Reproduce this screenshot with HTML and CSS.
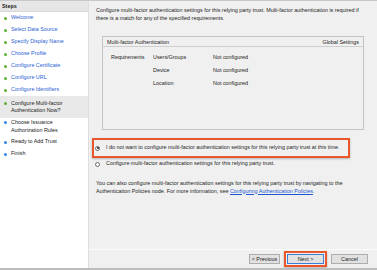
FILE: index.html
```html
<!DOCTYPE html>
<html>
<head>
<meta charset="utf-8">
<link rel="stylesheet" href="styles.css">
</head>
<body>
<div class="window">
  <div class="main">
    <aside class="steps">
      <div class="steps-head">Steps</div>
      <ul class="step-list">
        <li class="step done"><span class="dot"></span><span class="label">Welcome</span></li>
        <li class="step done"><span class="dot"></span><span class="label">Select Data Source</span></li>
        <li class="step done"><span class="dot"></span><span class="label">Specify Display Name</span></li>
        <li class="step done"><span class="dot"></span><span class="label">Choose Profile</span></li>
        <li class="step done"><span class="dot"></span><span class="label">Configure Certificate</span></li>
        <li class="step done"><span class="dot"></span><span class="label">Configure URL</span></li>
        <li class="step done"><span class="dot"></span><span class="label">Configure Identifiers</span></li>
        <li class="step done current multi"><span class="dot"></span><span class="label">Configure Multi-factor<br>Authentication Now?</span></li>
        <li class="step todo multi"><span class="dot"></span><span class="label">Choose Issuance<br>Authorization Rules</span></li>
        <li class="step todo"><span class="dot"></span><span class="label">Ready to Add Trust</span></li>
        <li class="step todo"><span class="dot"></span><span class="label">Finish</span></li>
      </ul>
    </aside>
    <section class="content">
      <div class="body">
        <p class="intro">Configure multi-factor authentication settings for this relying party trust. Multi-factor authentication is required if there is a match for any of the specified requirements.</p>
        <div class="mfa-box">
          <div class="mfa-head">
            <span>Multi-factor Authentication</span>
            <span>Global Settings</span>
          </div>
          <div class="mfa-grid">
            <span>Requirements</span><span>Users/Groups</span><span>Not configured</span>
            <span></span><span>Device</span><span>Not configured</span>
            <span></span><span>Location</span><span>Not configured</span>
          </div>
        </div>
        <div class="option highlighted">
          <span class="radio checked"></span>
          <span>I do not want to configure multi-factor authentication settings for this relying party trust at this time.</span>
        </div>
        <div class="option plain">
          <span class="radio"></span>
          <span>Configure multi-factor authentication settings for this relying party trust.</span>
        </div>
        <p class="note">You can also configure multi-factor authentication settings for this relying party trust by navigating to the<br>Authentication Policies node. For more information, see <a class="link" href="#">Configuring Authentication Policies</a>.</p>
      </div>
      <footer class="footer">
        <span class="btn btn-prev">&lt; Previous</span>
        <span class="btn-ring"><span class="btn btn-next">Next &gt;</span></span>
        <span class="btn btn-cancel">Cancel</span>
      </footer>
    </section>
  </div>
  <div class="bottom-bar"></div>
</div>
</body>
</html>
```

FILE: styles.css
```css
* { box-sizing: border-box; }
html, body { margin: 0; padding: 0; }
body {
  font-family: "Liberation Sans", Arial, sans-serif;
  font-size: 5.4px;
  line-height: 7.5px;
  color: #1e1e1e;
  background: #f0f0f0;
}
.window {
  width: 377px;
  height: 270px;
  display: flex;
  flex-direction: column;
  background: #f0f0f0;
  border-top: 1px solid #c8c8c8;
  overflow: hidden;
}
.main {
  flex: 1;
  display: flex;
  min-height: 0;
}
.steps {
  width: 89px;
  flex: none;
  background: #fff;
  border-right: 1px solid #dedede;
}
.steps-head {
  height: 11px;
  line-height: 11px;
  padding-left: 2px;
  font-weight: bold;
  background: #e6e6e6;
  border-bottom: 1px solid #d8d8d8;
  color: #222;
}
.step-list {
  list-style: none;
  margin: 0;
  padding: 0;
}
.step {
  display: flex;
  align-items: flex-start;
  height: 12px;
  padding-top: 2.25px;
  padding-left: 4px;
}
.step.multi {
  height: auto;
  padding-top: 1px;
  padding-bottom: 2px;
}
.step.current {
  background: #e9e9e9;
  padding-top: 3.5px;
  padding-bottom: 3.5px;
}
.dot {
  width: 3px;
  height: 3px;
  border-radius: 50%;
  margin-top: 2.25px;
  margin-right: 4px;
  flex: none;
}
.done .dot { background: #5fae2e; }
.todo .dot { background: #2f86e6; }
.done .label { color: #2a62d4; }
.current .label, .todo .label { color: #222; }

.content {
  flex: 1;
  display: flex;
  flex-direction: column;
  min-width: 0;
}
.body {
  flex: 1;
  padding: 6px 13px 0 7px;
}
.intro { margin: 0; }
.mfa-box {
  margin: 14px 0 0 6px;
  height: 94px;
  border: 1px solid #c4c4c4;
  background: #f0f0f0;
}
.mfa-head {
  display: flex;
  justify-content: space-between;
  height: 10px;
  line-height: 10px;
  padding: 0 4px;
  border-bottom: 1px solid #cfcfcf;
}
.mfa-grid {
  display: grid;
  grid-template-columns: 42px 60px auto;
  grid-auto-rows: 13px;
  align-items: center;
  padding: 4px 0 0 8px;
}
.option {
  display: flex;
  align-items: center;
}
.option.highlighted {
  margin: 8px 0 0 -4px;
  width: 258px;
  height: 20px;
  border: 2px solid #e8582c;
  box-shadow: 0 1px 2px rgba(0,0,0,0.25);
}
.option.plain {
  margin: 2px 0 0 -2px;
  height: 8px;
}
.radio {
  width: 5px;
  height: 5px;
  border: 1px solid #6a6a6a;
  border-radius: 50%;
  background: #fff;
  margin: 0 6px 0 1px;
  flex: none;
  display: flex;
  align-items: center;
  justify-content: center;
}
.radio.checked::after {
  content: "";
  width: 2px;
  height: 2px;
  border-radius: 50%;
  background: #222;
}
.note { margin: 12px 0 0; }
.link { color: #1a56d0; text-decoration: underline; }

.footer {
  height: 19px;
  border-top: 1px solid #fbfbfb;
  display: flex;
  justify-content: flex-end;
  align-items: center;
  gap: 4px;
  padding-right: 9px;
}
.btn {
  height: 10px;
  line-height: 8px;
  display: inline-flex;
  align-items: center;
  justify-content: center;
  background: #e1e1e1;
  border: 1px solid #adadad;
  color: #222;
}
.btn-prev { width: 31px; }
.btn-ring {
  border: 2px solid #e8582c;
  padding: 1px;
  display: inline-flex;
  box-shadow: 0 1px 2px rgba(0,0,0,0.25);
}
.btn-next { width: 37px; border-color: #3a7ed8; }
.btn-cancel { width: 37px; }
.bottom-bar {
  height: 2px;
  background: #bdbdbd;
  flex: none;
}
```
